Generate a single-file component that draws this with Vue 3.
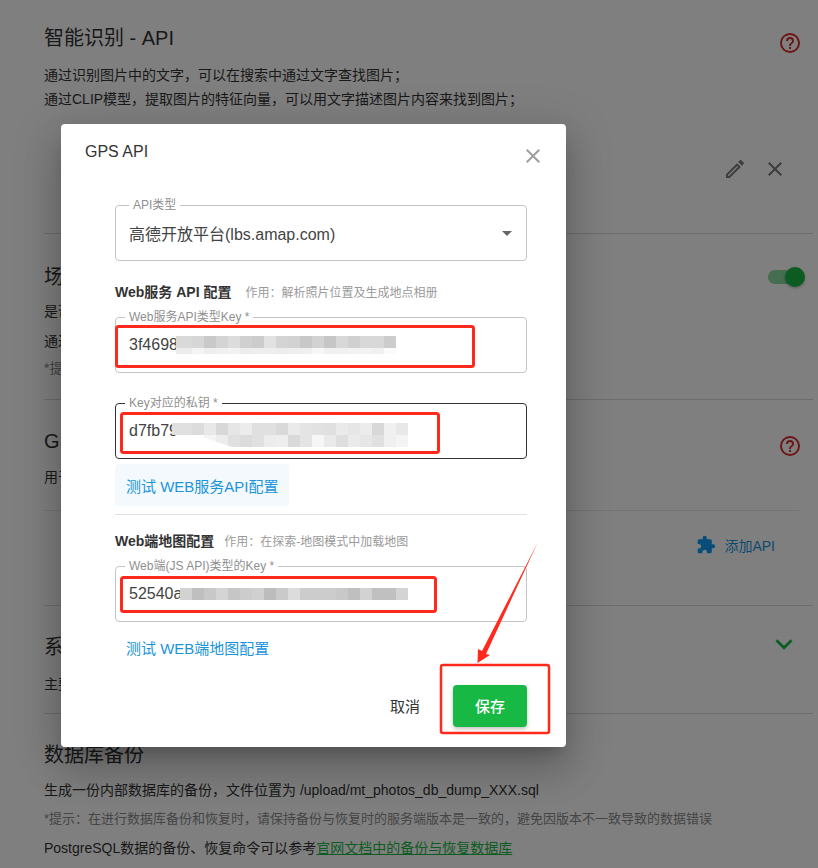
<script setup>
const icons = {
  help: 'M11,18H13V16H11V18M12,2A10,10 0 0,0 2,12A10,10 0 0,0 12,22A10,10 0 0,0 22,12A10,10 0 0,0 12,2M12,20C7.59,20 4,16.41 4,12C4,7.59 7.59,4 12,4C16.41,4 20,7.59 20,12C20,16.41 16.41,20 12,20M12,6A4,4 0 0,0 8,10H10A2,2 0 0,1 12,8A2,2 0 0,1 14,10C14,12 11,11.75 11,15H13C13,12.75 16,12.5 16,10A4,4 0 0,0 12,6Z',
  pencil: 'M14.06,9L15,9.94L5.92,19H5V18.08L14.06,9M17.66,3C17.41,3 17.15,3.1 16.96,3.29L15.13,5.12L18.88,8.87L20.71,7.04C21.1,6.65 21.1,6 20.71,5.63L18.37,3.29C18.17,3.09 17.92,3 17.66,3M14.06,6.19L3,17.25V21H6.75L17.81,9.94L14.06,6.19Z',
  close: 'M19,6.41L17.59,5L12,10.59L6.41,5L5,6.41L10.59,12L5,17.59L6.41,19L12,13.41L17.59,19L19,17.59L13.41,12L19,6.41Z',
  puzzle: 'M20.5,11H19V7C19,5.89 18.1,5 17,5H13V3.5A2.5,2.5 0 0,0 10.5,1A2.5,2.5 0 0,0 8,3.5V5H4A2,2 0 0,0 2,7V10.8H3.5C5,10.8 6.2,12 6.2,13.5C6.2,15 5,16.2 3.5,16.2H2V20A2,2 0 0,0 4,22H7.8V20.5C7.8,19 9,17.8 10.5,17.8C12,17.8 13.2,19 13.2,20.5V22H17A2,2 0 0,0 19,20V16H20.5A2.5,2.5 0 0,0 23,13.5A2.5,2.5 0 0,0 20.5,11Z',
  chevron: 'M7.41,8.58L12,13.17L16.59,8.58L18,10L12,16L6,10L7.41,8.58Z'
}

const gray = (v) => `rgb(${v},${v},${v})`
const toCells = (list) => list.map((v, i) => ({ id: i, color: gray(v) }))

const blur1 = [
  { id: 'a', cls: 'm-row-tall', cells: toCells([217, 217, 214, 201, 212, 220, 208, 204, 226, 212, 210, 200, 210, 198, 216, 208, 216, 216, 204]) },
  { id: 'b', cls: 'm-row-short', cells: toCells([236, 236, 244, 238, 240, 242, 236, 238, 238, 236, 238, 240, 246, 240, 240, 242, 242, 240, 251]) }
]
const blur2 = [
  { id: 'a', cls: 'm-row-tall', cells: toCells([224, 224, 220, 232, 216, 230, 236, 224, 224, 217, 234, 228, 226, 224, 234, 230, 236, 216, 240, 232]) },
  { id: 'b', cls: 'm-row-tall', cells: toCells([255, 255, 255, 244, 236, 224, 220, 224, 236, 238, 217, 228, 246, 234, 222, 234, 230, 224, 240, 244]) }
]
const blur3 = [
  { id: 'a', cls: 'm-row-tall', cells: toCells([210, 191, 200, 212, 198, 204, 208, 188, 202, 220, 204, 204, 204, 200, 191, 210, 192, 192, 212]) }
]
</script>

<template>
  <div class="page">
    <main class="settings">
      <section class="sec sec-a">
        <div class="sec-head">
          <h2>智能识别 - API</h2>
          <svg class="ic help" viewBox="0 0 24 24"><path :d="icons.help" /></svg>
        </div>
        <p>通过识别图片中的文字，可以在搜索中通过文字查找图片；</p>
        <p>通过CLIP模型，提取图片的特征向量，可以用文字描述图片内容来找到图片；</p>
        <div class="api-tools">
          <svg class="ic tool" viewBox="0 0 24 24"><path :d="icons.pencil" /></svg>
          <svg class="ic tool" viewBox="0 0 24 24"><path :d="icons.close" /></svg>
        </div>
      </section>

      <section class="sec sec-b">
        <div class="sec-head">
          <h2>场景识别</h2>
          <span class="toggle"><span class="thumb"></span></span>
        </div>
        <p class="p-b1">是否启用</p>
        <p class="p-b2">通过模型</p>
        <p class="hint p-b3">*提示</p>
      </section>

      <section class="sec sec-c">
        <div class="sec-head">
          <h2>GPS API</h2>
          <svg class="ic help" viewBox="0 0 24 24"><path :d="icons.help" /></svg>
        </div>
        <p>用于解析</p>
        <div class="add-row">
          <svg class="ic puzzle" viewBox="0 0 24 24"><path :d="icons.puzzle" /></svg>
          <span>添加API</span>
        </div>
      </section>

      <section class="sec sec-d">
        <div class="sec-head">
          <h2>系统设置</h2>
          <svg class="ic chevron" viewBox="0 0 24 24"><path :d="icons.chevron" /></svg>
        </div>
        <p>主要设置</p>
      </section>

      <section class="sec sec-e">
        <div class="sec-head"><h2>数据库备份</h2></div>
        <p>生成一份内部数据库的备份，文件位置为 /upload/mt_photos_db_dump_XXX.sql</p>
        <p class="hint hint-small">*提示：在进行数据库备份和恢复时，请保持备份与恢复时的服务端版本是一致的，避免因版本不一致导致的数据错误</p>
        <p>PostgreSQL数据的备份、恢复命令可以参考<a class="doc-link">官网文档中的备份与恢复数据库</a></p>
      </section>
    </main>

    <div class="scrim"></div>

    <div class="dialog">
      <header class="dialog-head">
        <span class="dialog-title">GPS API</span>
        <svg class="ic dialog-close" viewBox="0 0 24 24"><path :d="icons.close" /></svg>
      </header>

      <div class="field field-select">
        <span class="legend legend-select">API类型</span>
        <span class="value">高德开放平台(lbs.amap.com)</span>
        <span class="caret"></span>
      </div>

      <div class="group-head gh-1">
        <strong>Web服务 API 配置</strong>
        <span>作用：解析照片位置及生成地点相册</span>
      </div>

      <div class="field">
        <span class="legend">Web服务API类型Key *</span>
        <span class="value">3f46981</span>
        <div class="mosaic mosaic-1">
          <div v-for="row in blur1" :key="row.id" class="m-row" :class="row.cls">
            <i v-for="c in row.cells" :key="c.id" :style="{ background: c.color }"></i>
          </div>
        </div>
      </div>

      <div class="field field-focus">
        <span class="legend">Key对应的私钥 *</span>
        <span class="value">d7fb79</span>
        <div class="mosaic mosaic-2">
          <div v-for="row in blur2" :key="row.id" class="m-row" :class="row.cls">
            <i v-for="c in row.cells" :key="c.id" :style="{ background: c.color }"></i>
          </div>
        </div>
      </div>

      <button class="test-btn test-tint">测试 WEB服务API配置</button>
      <hr class="rule" />

      <div class="group-head gh-2">
        <strong>Web端地图配置</strong>
        <span>作用：在探索-地图模式中加载地图</span>
      </div>

      <div class="field">
        <span class="legend">Web端(JS API)类型的Key *</span>
        <span class="value">52540a</span>
        <div class="mosaic mosaic-3">
          <div v-for="row in blur3" :key="row.id" class="m-row" :class="row.cls">
            <i v-for="c in row.cells" :key="c.id" :style="{ background: c.color }"></i>
          </div>
        </div>
      </div>

      <button class="test-btn test-plain">测试 WEB端地图配置</button>

      <footer class="dialog-actions">
        <button class="cancel">取消</button>
        <button class="save">保存</button>
      </footer>
    </div>

    <svg class="marks" viewBox="0 0 818 868">
      <g fill="none" stroke="#ff2a1c" stroke-width="3">
        <rect x="116.5" y="326.5" width="357" height="40" rx="2" />
        <rect x="121.5" y="413.5" width="317" height="39" rx="2" />
        <rect x="121.5" y="577.5" width="314" height="34" rx="2" />
        <rect x="441" y="665" width="108" height="68" rx="2" stroke-width="2.5" />
      </g>
      <polygon fill="#ff2a1c" points="537.5,543 486,654 490,655 477.5,663 478,649 482,651" />
    </svg>
  </div>
</template>

<style scoped>
.page {
  position: relative;
  width: 818px;
  height: 868px;
  overflow: hidden;
  background: #fff;
  font-family: "Liberation Sans", "Noto Sans CJK SC", sans-serif;
  color: #333;
  font-size: 14px;
}
.settings {
  padding-left: 44px;
  width: 769px;
}
.sec {
  border-bottom: 1px solid #d8d8d8;
}
.sec-e {
  border-bottom: 0;
}
.sec-head {
  display: flex;
  align-items: center;
  justify-content: space-between;
  height: 32px;
  padding-right: 11px;
  margin-bottom: 9px;
}
.sec h2 {
  margin: 0;
  font-size: 20px;
  line-height: 32px;
  font-weight: 400;
  color: #333;
}
.sec p {
  margin: 0;
  font-size: 14px;
  line-height: 24px;
  white-space: nowrap;
}
.hint {
  color: #8a8a8a;
}
.sec p.hint-small {
  font-size: 13px;
}
.ic {
  display: block;
  flex: none;
  width: 24px;
  height: 24px;
  fill: currentColor;
}
.help {
  color: #d92a2a;
  position: relative;
  top: 5px;
}
.sec-a {
  padding-top: 22px;
  height: 211px;
}
.api-tools {
  display: flex;
  justify-content: flex-end;
  gap: 16px;
  margin-top: 46px;
  padding-right: 26px;
}
.tool {
  color: #7a7a7a;
}
.sec-b {
  padding-top: 27px;
  height: 138px;
}
.sec-b .sec-head {
  margin-bottom: 6px;
}
.p-b2 {
  margin-top: 6px !important;
}
.p-b3 {
  margin-top: 3px !important;
}
.toggle {
  position: relative;
  display: block;
  width: 34px;
  height: 14px;
  border-radius: 7px;
  background: rgba(24, 184, 68, 0.5);
}
.thumb {
  position: absolute;
  right: -3px;
  top: -3px;
  width: 20px;
  height: 20px;
  border-radius: 50%;
  background: #18b844;
  box-shadow: 0 1px 3px rgba(0, 0, 0, 0.3);
}
.sec-c {
  padding-top: 25px;
  height: 180px;
}
.sec-c .sec-head {
  margin-bottom: 8px;
}
.add-row {
  display: flex;
  align-items: center;
  justify-content: flex-end;
  gap: 8px;
  height: 67px;
  margin-top: 21px;
  padding-right: 24px;
  margin-right: 14px;
  border-top: 1px solid #e6e6e6;
  color: #1a95dc;
}
.add-row span {
  font-size: 14px;
}
.puzzle {
  color: #0f9bf0;
  width: 20px;
  height: 20px;
}
.sec-d {
  padding-top: 25px;
  height: 82px;
}
.sec-d .sec-head {
  padding-right: 12px;
}
.chevron {
  color: #18b844;
  width: 34px;
  height: 34px;
  position: relative;
  top: -3px;
}
.sec-e {
  padding-top: 25px;
}
.sec-e .sec-head {
  margin-bottom: 7px;
}
.sec-e p {
  margin-bottom: 5px;
}
.doc-link {
  color: #18b844;
  text-decoration: underline;
}

.scrim {
  position: absolute;
  inset: 0;
  background: rgba(0, 0, 0, 0.5);
}

.dialog {
  position: absolute;
  left: 61px;
  top: 124px;
  box-sizing: border-box;
  width: 505px;
  height: 623px;
  padding: 0 39px 0 54px;
  background: #fff;
  border-radius: 4px;
  box-shadow: 0 11px 15px -7px rgba(0, 0, 0, 0.2), 0 24px 38px 3px rgba(0, 0, 0, 0.14), 0 9px 46px 8px rgba(0, 0, 0, 0.12);
}
.dialog-head {
  position: relative;
  height: 81px;
  margin-left: -30px;
}
.dialog-title {
  position: absolute;
  left: 0;
  top: 18px;
  font-size: 16px;
  line-height: 20px;
  color: #333;
}
.dialog-close {
  position: absolute;
  right: -18px;
  top: 20px;
  color: #9e9e9e;
}
.field {
  position: relative;
  box-sizing: border-box;
  height: 56px;
  display: flex;
  align-items: center;
  padding: 0 13px;
  margin-bottom: 30px;
  border: 1px solid #c4c4c4;
  border-radius: 4px;
}
.field-select {
  justify-content: space-between;
  margin-bottom: 20px;
}
.field-focus {
  border-color: #333;
  margin-bottom: 5px;
}
.legend {
  position: absolute;
  left: 9px;
  top: -8px;
  padding: 0 4px;
  background: #fff;
  font-size: 12px;
  line-height: 14px;
  color: #8f8f8f;
  white-space: nowrap;
}
.legend-select {
  left: 13px;
}
.value {
  font-size: 16px;
  color: #444;
  white-space: nowrap;
}
.caret {
  width: 0;
  height: 0;
  margin-right: 1px;
  border-left: 5px solid transparent;
  border-right: 5px solid transparent;
  border-top: 5px solid #666;
}
.group-head {
  display: flex;
  align-items: center;
  gap: 14px;
  height: 20px;
  margin-bottom: 16px;
}
.group-head strong {
  font-size: 14px;
  color: #333;
}
.group-head span {
  font-size: 12px;
  color: #9a9a9a;
}
.gh-2 {
  gap: 10px;
  margin-top: 15px;
}
.mosaic {
  position: absolute;
}
.mosaic-1 {
  left: 60px;
  top: 18px;
  background: #fff;
}
.mosaic-2 {
  left: 56px;
  top: 19px;
  clip-path: polygon(0 0, 100% 0, 100% 100%, 60px 100%, 24px 50%, 0 50%);
}
.mosaic-3 {
  left: 64px;
  top: 21px;
}
.m-row {
  display: flex;
}
.m-row i {
  display: block;
  flex: 0 0 12px;
}
.m-row-tall i {
  height: 12px;
}
.m-row-short i {
  height: 6px;
}
.mosaic-1 .m-row i:first-child {
  flex-basis: 4px;
}
.mosaic-2 .m-row i:first-child {
  flex-basis: 8px;
}
.test-btn {
  display: block;
  height: 42px;
  padding: 0 11px;
  border: 0;
  border-radius: 4px;
  font: inherit;
  font-size: 15px;
  text-align: left;
  white-space: nowrap;
  color: #1a95dc;
  background: transparent;
}
.test-tint {
  width: 174px;
  padding-right: 0;
  background: #f3f9fd;
}
.test-plain {
  margin-top: -26px;
}
.rule {
  height: 1px;
  margin: 8px 0 0;
  border: 0;
  background: #e0e0e0;
}
.dialog-actions {
  display: flex;
  justify-content: flex-end;
  align-items: center;
  gap: 33px;
  margin-top: 17px;
}
.cancel {
  padding: 0 0 2px;
  border: 0;
  background: none;
  font: inherit;
  font-size: 15px;
  color: #333;
}
.save {
  width: 74px;
  height: 42px;
  padding: 0 0 2px;
  border: 0;
  border-radius: 4px;
  font: inherit;
  font-size: 15px;
  font-weight: 500;
  color: #fff;
  background: #18b844;
  box-shadow: 0 2px 4px rgba(0, 0, 0, 0.25);
}
.marks {
  position: absolute;
  inset: 0;
  width: 818px;
  height: 868px;
  pointer-events: none;
}
</style>
